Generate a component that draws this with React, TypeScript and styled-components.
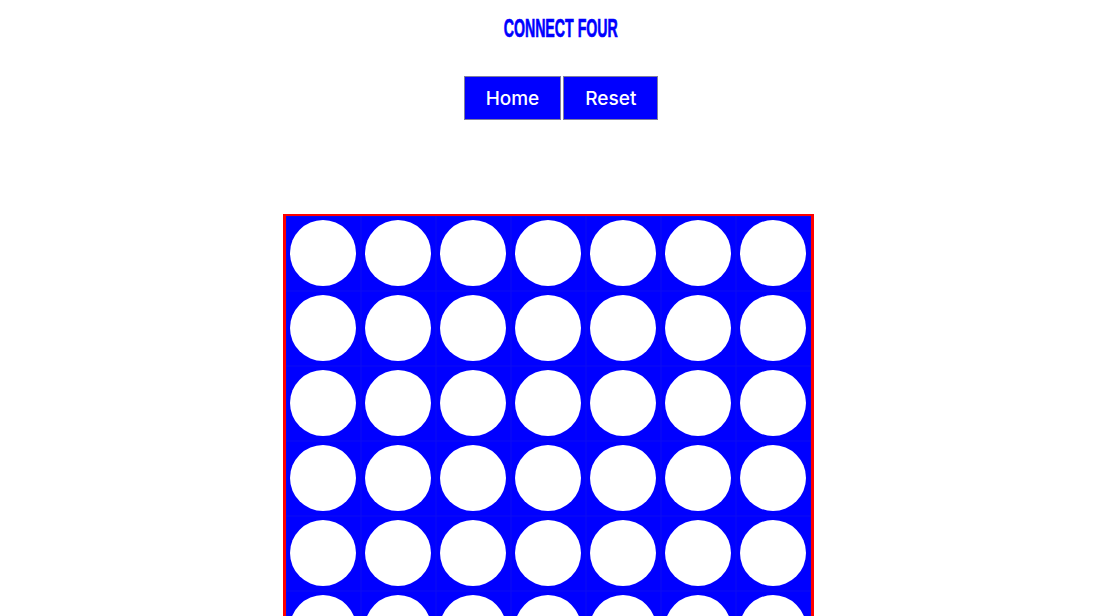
import React from "react";
import styled, { createGlobalStyle } from "styled-components";

const Global = createGlobalStyle`
  html, body { margin: 0; padding: 0; background: #ffffff; }
  body { font-family: "Inter", sans-serif; }
`;

const Page = styled.div`
  display: flex;
  flex-direction: column;
  align-items: center;
`;

const Header = styled.header`
  display: flex;
  flex-direction: column;
  align-items: center;
  padding-left: 21px;
`;

const Title = styled.h1`
  margin: 16px 0 0;
  font-family: "Liberation Sans Narrow", "Liberation Sans", sans-serif;
  font-weight: 700;
  font-size: 26px;
  line-height: 24px;
  color: #0000ff;
  letter-spacing: 0px;
  transform: scaleX(0.545);
  -webkit-text-stroke: 0.7px #0000ff;
`;

const Nav = styled.nav`
  display: flex;
  gap: 2px;
  margin-top: 36px;
`;

const NavButton = styled.button`
  height: 44px;
  padding: 0 21px;
  background: #0000ff;
  color: #ffffff;
  border: 1px solid #7f7f9f;
  font-family: "Inter", sans-serif;
  font-size: 19px;
  font-weight: 500;
  cursor: pointer;
`;

const Board = styled.div`
  margin-top: 94px;
  margin-right: 4px;
  display: grid;
  grid-template-columns: repeat(7, 75px);
  grid-auto-rows: 75px;
  border: 2px solid #ff0000;
  border-left-width: 3px;
  border-right-width: 3px;
  background: #0000ff;
`;

const Cell = styled.div`
  display: flex;
  align-items: flex-start;
  justify-content: flex-start;
  padding: 4px;
  box-shadow: inset 0 0 0 0.5px #0d0df2;
`;

const Hole = styled.div`
  width: 66px;
  height: 66px;
  flex: none;
  border-radius: 50%;
  background: #ffffff;
`;

export default function App() {
  const cells = Array.from({ length: 42 }, (_, i) => i);
  return (
    <Page>
      <Global />
      <Header>
        <Title>CONNECT FOUR</Title>
        <Nav>
          <NavButton>Home</NavButton>
          <NavButton>Reset</NavButton>
        </Nav>
      </Header>
      <Board>
        {cells.map((i) => (
          <Cell key={i}>
            <Hole />
          </Cell>
        ))}
      </Board>
    </Page>
  );
}
